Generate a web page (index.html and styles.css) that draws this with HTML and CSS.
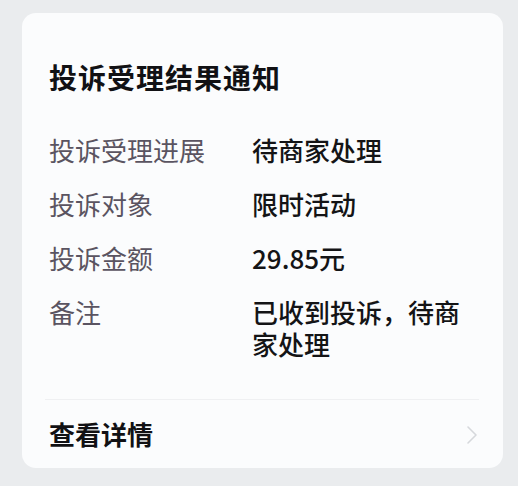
FILE: index.html
```html
<!DOCTYPE html>
<html lang="zh-CN">
<head>
<meta charset="utf-8">
<link rel="stylesheet" href="styles.css">
</head>
<body>
<div class="card">
  <h1 class="title">投诉受理结果通知</h1>
  <dl class="rows">
    <dt>投诉受理进展</dt><dd>待商家处理</dd>
    <dt>投诉对象</dt><dd>限时活动</dd>
    <dt>投诉金额</dt><dd>29.85元</dd>
    <dt>备注</dt><dd>已收到投诉，待商家处理</dd>
  </dl>
  <div class="divider"></div>
  <div class="footer">
    <span class="link">查看详情</span>
    <svg class="chev" width="14" height="20" viewBox="0 0 14 20"><path d="M3 2 L11 10 L3 18" fill="none" stroke="#d6d8dc" stroke-width="1.6" stroke-linecap="round" stroke-linejoin="round"/></svg>
  </div>
</div>
</body>
</html>
```
FILE: styles.css
```css
html, body {
  margin: 0;
  padding: 0;
  background: #eaecee;
}
body {
  width: 518px;
  height: 486px;
  overflow: hidden;
  font-family: "Noto Sans CJK SC", "Noto Sans", sans-serif;
}
.card {
  margin: 13px 0 0 22px;
  width: 481px;
  height: 455px;
  box-sizing: border-box;
  background: #fbfcfd;
  border-radius: 14px;
  padding: 44px 24px 0 27px;
  display: flex;
  flex-direction: column;
}
.title {
  margin: 0;
  font-size: 28px;
  line-height: 40px;
  font-weight: 700;
  color: #111114;
  letter-spacing: 1px;
}
.rows {
  margin: 37px 0 0 0;
  display: grid;
  grid-template-columns: 203px 1fr;
  row-gap: 22px;
  font-size: 26px;
  line-height: 32px;
}
.rows dt {
  color: #5a5461;
  font-weight: 400;
}
.rows dd {
  margin: 0;
  color: #141416;
  font-weight: 500;
}
.divider {
  margin-top: 39px;
  height: 1px;
  background: #eff0f2;
  margin-left: -4px;
}
.footer {
  display: flex;
  align-items: center;
  justify-content: space-between;
  height: 70px;
}
.link {
  font-size: 26px;
  font-weight: 700;
  color: #111114;
}
.chev {
  margin-top: 2px;
}
```
